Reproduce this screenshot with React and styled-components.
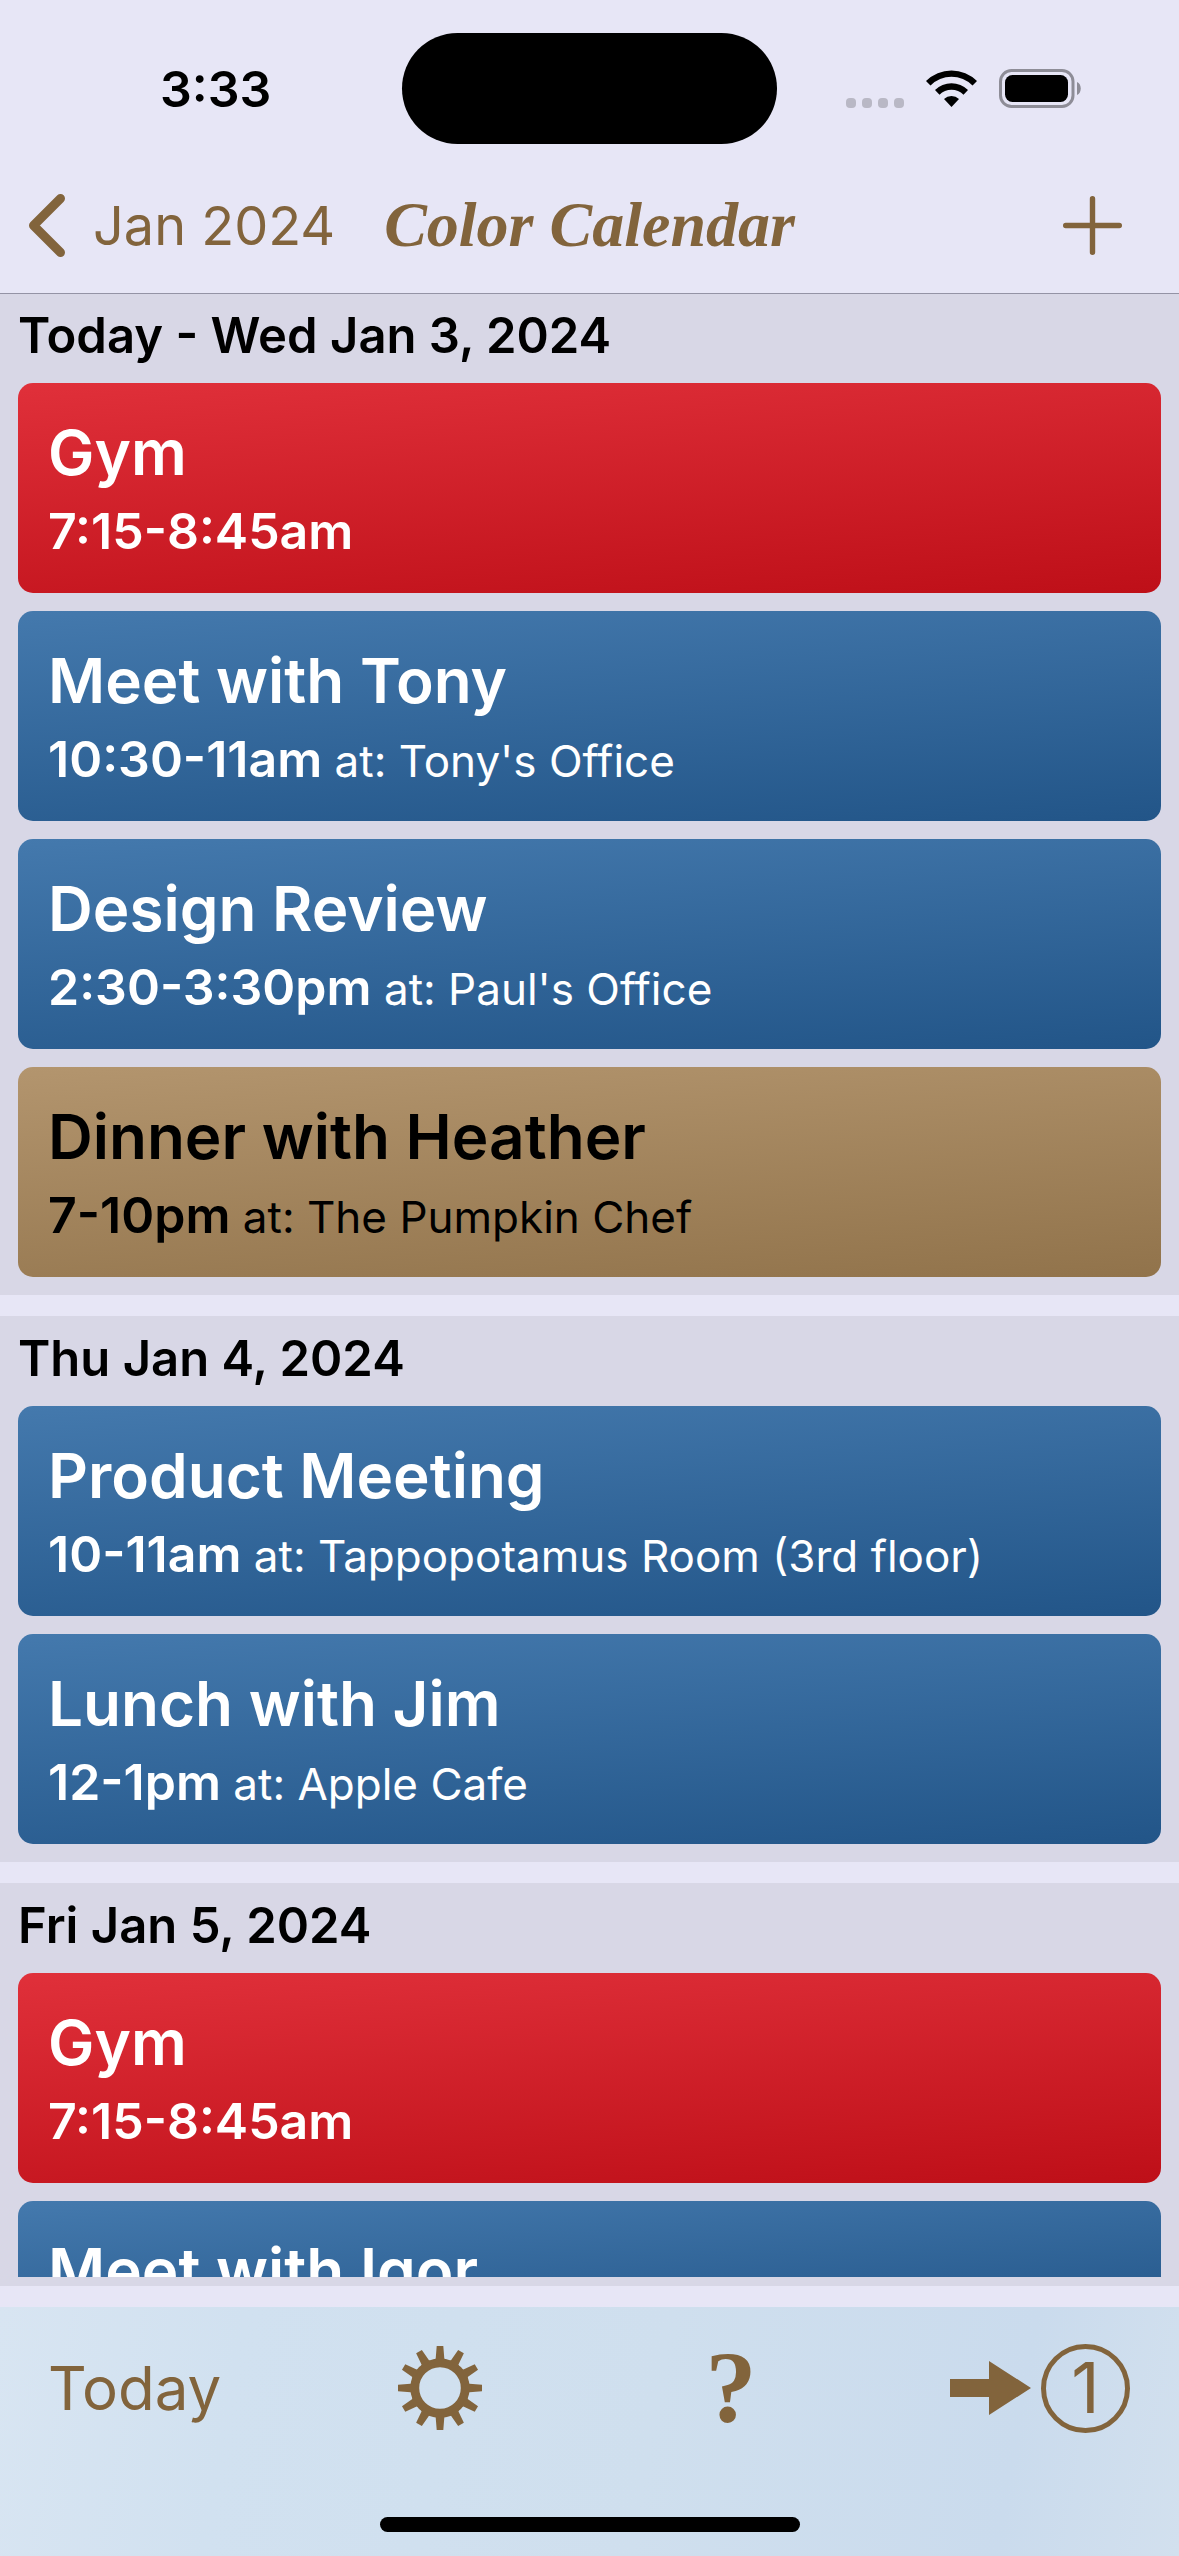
import React, { Fragment } from 'react';
import styled, { createGlobalStyle } from 'styled-components';

const days = [
  {
    label: 'Today - Wed Jan 3, 2024',
    events: [
      { title: 'Gym', time: '7:15-8:45am', color: 'red' },
      {
        title: 'Meet with Tony',
        time: '10:30-11am',
        location: "Tony's Office",
        color: 'blue'
      },
      {
        title: 'Design Review',
        time: '2:30-3:30pm',
        location: "Paul's Office",
        color: 'blue'
      },
      {
        title: 'Dinner with Heather',
        time: '7-10pm',
        location: 'The Pumpkin Chef',
        color: 'tan'
      }
    ]
  },
  {
    label: 'Thu Jan 4, 2024',
    events: [
      {
        title: 'Product Meeting',
        time: '10-11am',
        location: 'Tappopotamus Room (3rd floor)',
        color: 'blue'
      },
      {
        title: 'Lunch with Jim',
        time: '12-1pm',
        location: 'Apple Cafe',
        color: 'blue'
      }
    ]
  },
  {
    label: 'Fri Jan 5, 2024',
    events: [
      { title: 'Gym', time: '7:15-8:45am', color: 'red' },
      { title: 'Meet with Igor', color: 'blue' }
    ]
  }
];

const eventColors = {
  red: { from: '#e0303a', to: '#be0f18', text: '#fff' },
  blue: { from: '#4479ad', to: '#225588', text: '#fff' },
  tan: { from: '#b3956e', to: '#91734b', text: '#000' }
};

const WifiIcon = () => (
  <svg width="51" height="37" viewBox="0 0 51 37" aria-hidden="true">
    <path d="M0 11 A36 36 0 0 1 51 11 L46.500 15.500 A29.700 29.700 0 0 0 4.500 15.500 Z" />
    <path d="M9 20 A23.500 23.500 0 0 1 42 20 L37.500 24.700 A17 17 0 0 0 13.500 24.700 Z" />
    <path d="M18 29 A11 11 0 0 1 33 29 L25.500 37 Z" />
  </svg>
);

const BatteryIcon = () => (
  <svg width="82" height="39" viewBox="0 0 82 39" aria-hidden="true">
    <rect
      x="1.500"
      y="1.500"
      width="72.500"
      height="36"
      rx="11"
      fill="none"
      stroke="#8e8d97"
      strokeWidth="3"
    />
    <rect x="6" y="6" width="63" height="27" rx="7.500" />
    <path d="M78 13 C83 15 83 24 78 26 Z" fill="#8e8d97" />
  </svg>
);

const ChevronIcon = () => (
  <svg width="37" height="63" viewBox="0 0 37 63" aria-hidden="true">
    <path
      d="M32.500 4.500 L5.500 31.500 L32.500 58.500"
      fill="none"
      stroke="currentColor"
      strokeWidth="9"
      strokeLinecap="round"
      strokeLinejoin="round"
    />
  </svg>
);

const PlusIcon = () => (
  <svg width="59" height="59" viewBox="0 0 59 59" aria-hidden="true">
    <path
      d="M29.500 2.700 V56.300 M2.700 29.500 H56.300"
      stroke="currentColor"
      strokeWidth="5.400"
      strokeLinecap="round"
    />
  </svg>
);

const GearIcon = () => (
  <svg width="84" height="84" viewBox="-42 -42 84 84" aria-hidden="true">
    <circle r="25.200" fill="none" stroke="currentColor" strokeWidth="8.800" />
    {Array.from({ length: 12 }, (_, i) => (
      <path
        key={i}
        d="M-3.300 -42 H3.300 L4.300 -29.500 L6.500 -27 H-6.500 L-4.300 -29.500 Z"
        fill="currentColor"
        transform={`rotate(${i * 30})`}
      />
    ))}
  </svg>
);

const ArrowIcon = () => (
  <svg width="81" height="54" viewBox="0 0 81 54" aria-hidden="true">
    <path d="M0 18 H39 V0 L81 27 L39 54 V36 H0 Z" fill="currentColor" />
  </svg>
);

const EventCard = ({ event }) => (
  <Card palette={eventColors[event.color]}>
    <EventTitle>{event.title}</EventTitle>
    {event.time && (
      <EventDetail>
        {event.time}
        {event.location && <EventPlace> at: {event.location}</EventPlace>}
      </EventDetail>
    )}
  </Card>
);

const App = () => {
  return (
    <Fragment>
      <GlobalStyle />
      <Screen>
        <StatusBar>
          <Clock>3:33</Clock>
          <Island />
          <StatusIcons>
            <SignalDots>
              <Dot />
              <Dot />
              <Dot />
              <Dot />
            </SignalDots>
            <WifiIcon />
            <BatteryIcon />
          </StatusIcons>
        </StatusBar>
        <NavBar>
          <BackButton>
            <ChevronIcon />
            Jan 2024
          </BackButton>
          <AppTitle>Color Calendar</AppTitle>
          <AddButton aria-label="Add event">
            <PlusIcon />
          </AddButton>
        </NavBar>
        <DayList>
          {days.map(day => (
            <Day key={day.label}>
              <DayLabel>{day.label}</DayLabel>
              <Events>
                {day.events.map(event => (
                  <EventCard key={event.title} event={event} />
                ))}
              </Events>
            </Day>
          ))}
        </DayList>
        <BottomBar>
          <Tools>
            <ToolButton>Today</ToolButton>
            <IconButton aria-label="Settings">
              <GearIcon />
            </IconButton>
            <HelpButton>?</HelpButton>
            <ToolButton>
              <ArrowIcon />
              <DayCount>1</DayCount>
            </ToolButton>
          </Tools>
          <HomeIndicator />
        </BottomBar>
      </Screen>
    </Fragment>
  );
};

export default App;

const GlobalStyle = createGlobalStyle`
  * {
    box-sizing: border-box;
  }

  body {
    margin: 0;
    background-color: #e7e6f6;
    font-family: Inter, 'Liberation Sans', sans-serif;
  }

  button {
    padding: 0;
    border: none;
    background: none;
    color: #82643c;
    font-family: inherit;
    cursor: pointer;
  }

  svg {
    display: block;
    flex: none;
  }
`;

const Screen = styled.div`
  display: flex;
  flex-direction: column;
  height: 100vh;
  overflow: hidden;
`;

const StatusBar = styled.div`
  display: grid;
  grid-template-columns: 1fr auto 1fr;
  align-items: center;
  flex: none;
  height: 177px;
`;

const Clock = styled.div`
  padding-left: 160px;
  font-size: 50px;
  font-weight: 600;
`;

const Island = styled.div`
  width: 375px;
  height: 111px;
  border-radius: 56px;
  background-color: #000;
`;

const StatusIcons = styled.div`
  display: flex;
  justify-content: flex-end;
  align-items: center;
  gap: 22px;
  padding-right: 98px;
`;

const SignalDots = styled.div`
  display: flex;
  align-self: flex-end;
  gap: 6px;
`;

const Dot = styled.span`
  width: 10px;
  height: 10px;
  border-radius: 4px;
  background-color: #b9b8c5;
`;

const NavBar = styled.header`
  position: relative;
  display: grid;
  grid-template-columns: 1fr auto 1fr;
  align-items: center;
  flex: none;
  height: 116px;
  padding: 0 28px 20px;
  box-shadow: 0 1px 0 #9493a5;
`;

const BackButton = styled.button`
  display: flex;
  align-items: center;
  gap: 28px;
  font-size: 54px;
  white-space: nowrap;
`;

const AppTitle = styled.h1`
  margin: 0;
  color: #82643c;
  font-family: 'Liberation Serif', serif;
  font-size: 64px;
  font-style: italic;
  font-weight: 700;
  white-space: nowrap;
`;

const AddButton = styled.button`
  justify-self: end;
  padding-right: 29px;
`;

const Events = styled.div`
  display: flex;
  flex-direction: column;
  gap: 18px;
  padding: 0 18px;
  overflow: hidden;
`;

const Day = styled.section`
  display: flex;
  flex-direction: column;
  flex: none;
  padding-bottom: 18px;
  background-color: #d8d7e6;

  /* the last day fills what is left above the bottom bar */
  &:last-child {
    flex: 1;
    min-height: 0;
    padding-bottom: 9px;
  }
`;

const DayList = styled.main`
  display: flex;
  flex-direction: column;
  flex: 1;
  gap: 21px;
  min-height: 0;
  padding-bottom: 21px;
`;

const DayLabel = styled.h2`
  flex: none;
  height: 90px;
  margin: 0;
  padding-left: 18px;
  font-size: 49px;
  font-weight: 600;
  line-height: 86px;
`;

const Card = styled.article`
  flex: none;
  padding: 31px 30px 23px;
  border-radius: 15px;
  background-image: linear-gradient(
    176deg,
    ${props => props.palette.from},
    ${props => props.palette.to}
  );
  color: ${props => props.palette.text};
`;

const EventTitle = styled.h3`
  margin: 0;
  font-size: 62px;
  font-weight: 600;
  line-height: 78px;
`;

const EventDetail = styled.p`
  margin: 0;
  font-size: 50px;
  font-weight: 600;
  line-height: 78px;
`;

const EventPlace = styled.span`
  font-size: 44px;
  font-weight: 400;
  line-height: 1;
`;

const BottomBar = styled.footer`
  flex: none;
  height: 249px;
  background-image: linear-gradient(
    100deg,
    #d8e5f2,
    #d1e1f0 20%,
    #cfdfee 55%,
    #cadbed 85%,
    #d2e0ee
  );
`;

const Tools = styled.nav`
  display: flex;
  justify-content: space-between;
  align-items: center;
  height: 162px;
  padding: 0 49px 0 48px;
`;

const ToolButton = styled.button`
  display: flex;
  align-items: center;
  gap: 10px;
  font-size: 60px;
`;

const IconButton = styled.button`
  display: flex;
  justify-content: center;
  align-items: center;
  width: 144px;
`;

const HelpButton = styled(IconButton)`
  font-family: 'Liberation Serif', serif;
  font-size: 102px;
  font-weight: 700;
  line-height: 102px;
`;

const DayCount = styled.span`
  display: flex;
  justify-content: center;
  align-items: center;
  width: 89px;
  height: 89px;
  border: 5px solid;
  border-radius: 50%;
  font-size: 70px;
  line-height: 70px;
`;

const HomeIndicator = styled.div`
  width: 420px;
  height: 15px;
  margin: 48px auto 0;
  border-radius: 8px;
  background-color: #000;
`;
